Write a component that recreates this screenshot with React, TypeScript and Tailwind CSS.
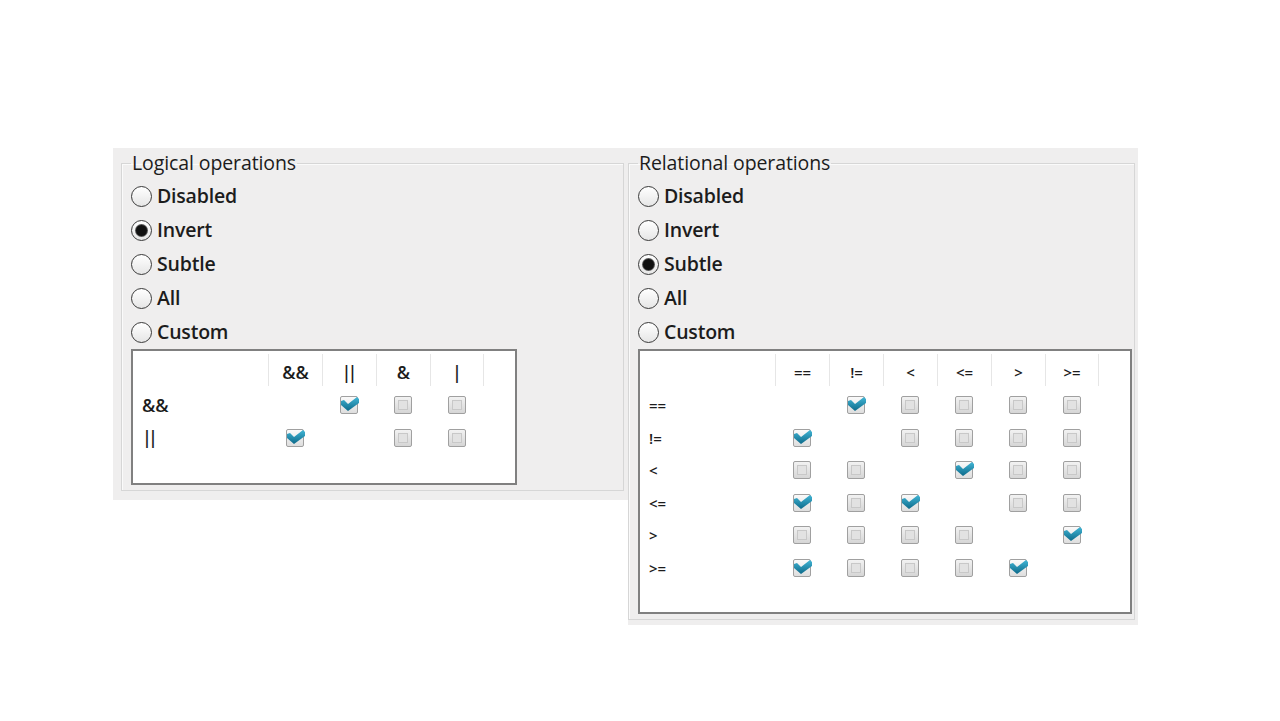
import React from 'react';

const FONT = { fontFamily: '"Open Sans", "DejaVu Sans", sans-serif' };

type Cell = 'x' | 'c' | 'u';

function Radio({ label, checked }: { label: string; checked?: boolean }) {
  return (
    <div className="flex items-center h-[34px]">
      <span className="w-[21px] h-[21px] rounded-full border-[1.5px] border-[#3a3a3a] bg-gradient-to-b from-white to-[#e6e6e6] flex items-center justify-center">
        {checked && <span className="w-[11px] h-[11px] rounded-full bg-[#111] ring-1 ring-[#555]" />}
      </span>
      <span className="ml-[5px] text-[19.5px] font-semibold text-[#1c1c1c] leading-none tracking-[-0.2px]">{label}</span>
    </div>
  );
}

function Check({ state }: { state: Cell }) {
  if (state === 'x') return null;
  if (state === 'u') {
    return (
      <span className="w-[18px] h-[18px] rounded-[2px] border border-[#a0a0a0] bg-gradient-to-b from-[#f2f2f2] to-[#d6d6d6] flex items-center justify-center">
        <span className="w-[10px] h-[10px] border border-[#c8c8c8] bg-[#e2e2e2]" />
      </span>
    );
  }
  return (
    <span className="relative w-[18px] h-[18px] rounded-[2px] border border-[#a0a0a0] bg-gradient-to-b from-[#fafafa] to-[#dedede]">
      <svg className="absolute -left-[1px] -top-[2px]" width="20" height="18" viewBox="0 0 20 18">
        <defs>
          <linearGradient id="tk" x1="0" y1="0" x2="0" y2="1">
            <stop offset="0" stopColor="#42b6d6" />
            <stop offset="1" stopColor="#0d6a8a" />
          </linearGradient>
        </defs>
        <path d="M1 6 L4 5 L8 9 L17 2 L19 4 L19 8 L8 16 L1 10 Z" fill="url(#tk)" />
      </svg>
    </span>
  );
}

function Matrix({ ops, rows, size, height }: { ops: string[]; rows: Cell[][]; size: string; height: string }) {
  return (
    <div className={`border-2 border-[#808080] bg-white ${height}`}>
      <div className="flex h-[38px] items-stretch">
        <div className="w-[135px]" />
        {ops.map((op, i) => (
          <div
            key={op}
            className={`w-[54px] flex items-center justify-center pt-[4px] border-l border-[#e6e6e6] my-[3px] ${i === ops.length - 1 ? 'border-r' : ''}`}
          >
            <span className={`${size} font-semibold text-[#1c1c1c] ${op === '||' ? 'tracking-[-4px] pr-[4px]' : ''}`}>{op}</span>
          </div>
        ))}
      </div>
      {rows.map((row, r) => (
        <div key={r} className="flex h-[32.5px] items-center">
          <div className={`w-[135px] pl-[9px] ${size} font-semibold text-[#1c1c1c] ${ops[r] === '||' ? 'tracking-[-4px]' : ''}`}>{ops[r]}</div>
          {row.map((c, i) => (
            <div key={i} className="w-[54px] flex items-center justify-center">
              <Check state={c} />
            </div>
          ))}
        </div>
      ))}
    </div>
  );
}

function Group({ title, selected, width, children }: { title: string; selected: string; width: string; children: React.ReactNode }) {
  const opts = ['Disabled', 'Invert', 'Subtle', 'All', 'Custom'];
  return (
    <fieldset className={`${width} min-w-0 border border-[#d6d6d6] shadow-[inset_1px_1px_0_#fafafa] pl-[9px] pr-[2px] pb-[5px]`}>
      <legend className="px-[1px] text-[19.5px] font-medium text-[#1c1c1c] leading-[24px] tracking-[-0.1px]">{title}</legend>
      <div className="pt-[4px]">
        {opts.map((o) => (
          <Radio key={o} label={o} checked={o === selected} />
        ))}
      </div>
      {children}
    </fieldset>
  );
}

export default function App() {
  const logical: Cell[][] = [
    ['x', 'c', 'u', 'u'],
    ['c', 'x', 'u', 'u'],
  ];
  const relational: Cell[][] = [
    ['x', 'c', 'u', 'u', 'u', 'u'],
    ['c', 'x', 'u', 'u', 'u', 'u'],
    ['u', 'u', 'x', 'c', 'u', 'u'],
    ['c', 'u', 'c', 'x', 'u', 'u'],
    ['u', 'u', 'u', 'u', 'x', 'c'],
    ['c', 'u', 'u', 'u', 'c', 'x'],
  ];
  return (
    <div className="w-[1280px] h-[721px] bg-white overflow-hidden" style={FONT}>
      <div className="flex items-start pt-[148px] pl-[113px]">
        <div className="w-[515px] h-[352px] bg-[#efeeee] pl-[8px] pt-[3px]">
          <Group title="Logical operations" selected="Invert" width="w-[503px]">
            <div className="w-[386px]">
              <Matrix ops={['&&', '||', '&', '|']} rows={logical} size="text-[18px]" height="h-[136px]" />
            </div>
          </Group>
        </div>
        <div className="w-[510px] h-[477px] bg-[#efeeee] pt-[3px]">
          <Group title="Relational operations" selected="Subtle" width="w-[507px]">
            <div className="w-[494px]">
              <Matrix ops={['==', '!=', '<', '<=', '>', '>=']} rows={relational} size="text-[15px]" height="h-[265px]" />
            </div>
          </Group>
        </div>
      </div>
    </div>
  );
}
